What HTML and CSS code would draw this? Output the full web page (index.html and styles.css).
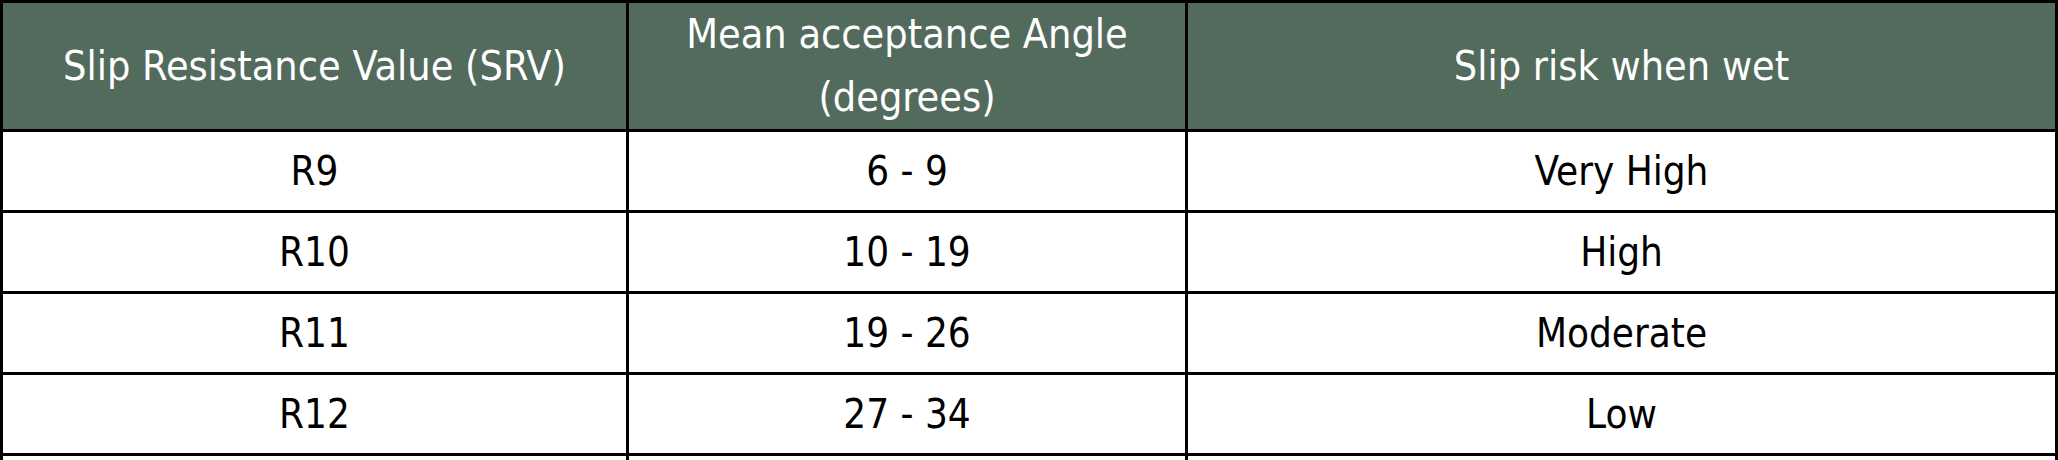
FILE: index.html
```html
<!DOCTYPE html>
<html>

<head lang="en">
    <meta charset="UTF-8">
    <title>Slip resistance</title>
    <link rel="stylesheet" href="styles.css">
</head>

<body>
    <table class="srv-table">
        <colgroup>
            <col class="col-srv">
            <col class="col-angle">
            <col class="col-risk">
        </colgroup>
        <thead>
            <tr>
                <th>Slip Resistance Value (SRV)</th>
                <th>Mean acceptance Angle<br>(degrees)</th>
                <th>Slip risk when wet</th>
            </tr>
        </thead>
        <tbody>
            <tr>
                <td>R9</td>
                <td>6 - 9</td>
                <td>Very High</td>
            </tr>
            <tr>
                <td>R10</td>
                <td>10 - 19</td>
                <td>High</td>
            </tr>
            <tr>
                <td>R11</td>
                <td>19 - 26</td>
                <td>Moderate</td>
            </tr>
            <tr>
                <td>R12</td>
                <td>27 - 34</td>
                <td>Low</td>
            </tr>
            <!-- 下一行只露出顶部 -->
            <tr>
                <td></td>
                <td></td>
                <td></td>
            </tr>
        </tbody>
    </table>
</body>

</html>
```

FILE: styles.css
```css
* {
    padding: 0px;
    margin: 0px;
    box-sizing: border-box;
}

body {
    background: #ffffff;
    font-family: "DejaVu Sans Condensed", "DejaVu Sans", sans-serif;
    font-stretch: condensed;
}

/* 表格 */
.srv-table {
    width: 2058px;
    table-layout: fixed;
    border-collapse: separate;
    border-spacing: 0px;
    border-left: 3px solid #000000;
    border-top: 3px solid #000000;
}

.col-srv {
    width: 626px;
}

.col-angle {
    width: 559px;
}

.col-risk {
    width: 870px;
}

.srv-table th,
.srv-table td {
    border-right: 3px solid #000000;
    border-bottom: 3px solid #000000;
    text-align: center;
    vertical-align: middle;
}

/* 表头 */
.srv-table th {
    height: 128px;
    background: #526b5c;
    color: #ffffff;
    font-weight: normal;
    font-size: 41px;
    line-height: 63px;
}

.srv-table td {
    height: 81px;
    color: #000000;
    font-size: 40px;
    line-height: 48px;
}
```
